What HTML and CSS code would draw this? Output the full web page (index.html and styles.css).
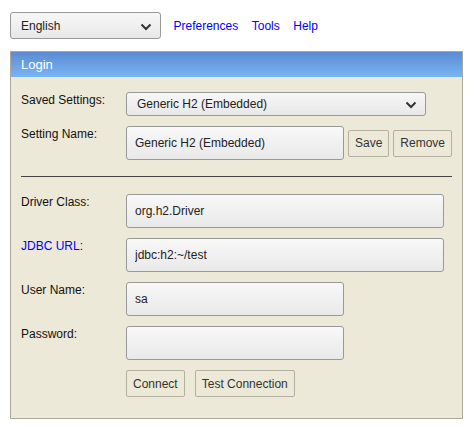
FILE: index.html
```html
<!DOCTYPE html>
<html lang="en">
<head>
    <meta charset="UTF-8">
    <title>H2 Console</title>
    <link rel="stylesheet" href="styles.css">
</head>
<body>
    <div class="toolbar">
        <span class="select-wrap lang">
            <select class="select">
                <option>English</option>
            </select>
            <svg class="chevron" width="12" height="8" viewBox="0 0 12 8"><path d="M1.5 1.5 L6 6 L10.5 1.5" fill="none" stroke="#333" stroke-width="2"/></svg>
        </span>
        <a href="#" class="link">Preferences</a>
        <a href="#" class="link">Tools</a>
        <a href="#" class="link">Help</a>
    </div>

    <div class="login">
        <div class="login-head">Login</div>
        <div class="login-body">
            <div class="label">Saved Settings:</div>
            <div class="field">
                <span class="select-wrap saved">
                    <select class="select">
                        <option>Generic H2 (Embedded)</option>
                    </select>
                    <svg class="chevron" width="12" height="8" viewBox="0 0 12 8"><path d="M1.5 1.5 L6 6 L10.5 1.5" fill="none" stroke="#333" stroke-width="2"/></svg>
                </span>
            </div>

            <div class="label">Setting Name:</div>
            <div class="field inline">
                <input class="input short" type="text" value="Generic H2 (Embedded)">
                <button class="btn">Save</button>
                <button class="btn">Remove</button>
            </div>

            <hr class="divider">

            <div class="label">Driver Class:</div>
            <div class="field"><input class="input wide" type="text" value="org.h2.Driver"></div>

            <div class="label"><a href="#" class="link">JDBC URL</a>:</div>
            <div class="field"><input class="input wide" type="text" value="jdbc:h2:~/test"></div>

            <div class="label">User Name:</div>
            <div class="field"><input class="input short" type="text" value="sa"></div>

            <div class="label">Password:</div>
            <div class="field"><input class="input short" type="password" value=""></div>

            <div></div>
            <div class="field actions">
                <button class="btn">Connect</button>
                <button class="btn">Test Connection</button>
            </div>
        </div>
    </div>
</body>
</html>
```

FILE: styles.css
```css
* { box-sizing: border-box; }

body {
    margin: 0;
    padding: 12px 10px 0 10px;
    background: #fff;
    font-family: "Liberation Sans", Arial, sans-serif;
    font-size: 12px;
    color: #000;
}

.toolbar {
    display: flex;
    align-items: center;
    height: 27px;
    gap: 13.5px;
}

.toolbar .select-wrap { margin-right: -1px; }

.link {
    color: #0000ff;
    text-decoration: none;
    font-size: 12px;
}

.select-wrap {
    position: relative;
    display: inline-block;
}

.select {
    appearance: none;
    -webkit-appearance: none;
    width: 100%;
    height: 100%;
    margin: 0;
    border: 1px solid #999;
    border-radius: 3px;
    background: linear-gradient(#f7f7f7, #e8e8e8);
    font-family: inherit;
    font-size: 12px;
    color: #222;
    padding: 0 0 0 10px;
}

.chevron {
    position: absolute;
    top: 50%;
    margin-top: -3px;
    right: 9px;
    pointer-events: none;
}

.lang {
    width: 151px;
    height: 27px;
}

.saved {
    width: 300px;
    height: 24px;
}

.login {
    margin-top: 12px;
    width: 453px;
    border: 1px solid #aca899;
    background: #ece9d8;
}

.login-head {
    height: 25px;
    line-height: 25px;
    padding-left: 10px;
    color: #fff;
    font-size: 13px;
    background: linear-gradient(#5b8bd1, #78b5f5);
}

.login-body {
    display: grid;
    grid-template-columns: 105px 1fr;
    row-gap: 10px;
    padding: 15px 10px 21px 10px;
}

.label {
    padding-top: 1px;
    color: #111;
}

.field.inline {
    display: flex;
    align-items: center;
    gap: 4px;
}

.input {
    height: 34px;
    margin: 0;
    border: 1px solid #999;
    border-radius: 3px;
    background: linear-gradient(#f8f8f8, #e9e9e9);
    font-family: inherit;
    font-size: 12px;
    color: #222;
    padding: 0 8px;
}

.input.short { width: 218px; }
.input.wide { width: 318px; }

.btn {
    height: 27px;
    margin: 0;
    padding: 0 6px;
    border: 1px solid #b3b0a0;
    border-radius: 2px;
    background: #ece9d8;
    font-family: inherit;
    font-size: 12px;
    color: #333;
}

.divider {
    grid-column: 1 / -1;
    border: 0;
    border-top: 1px solid #444;
    margin: 6px 0 7px 0;
}

.actions {
    display: flex;
    gap: 10px;
}
```
